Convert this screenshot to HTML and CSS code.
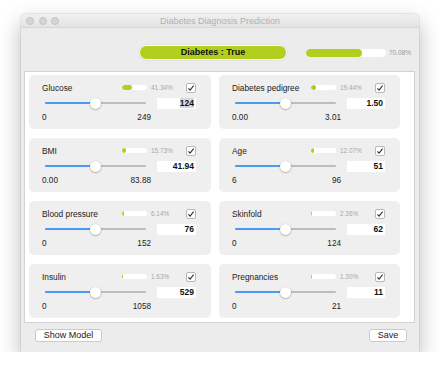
FILE: index.html
```html
<!DOCTYPE html>
<html lang="en">
<head>
    <meta charset="UTF-8">
    <title>Diabetes Diagnosis Prediction</title>
    <link rel="stylesheet" href="styles.css">
</head>
<body>
    <div class="window">
        <div class="titlebar">
            <div class="lights">
                <span></span><span></span><span></span>
            </div>
            <div class="title">Diabetes Diagnosis Prediction</div>
        </div>

        <div class="header">
            <div class="result">Diabetes : True</div>
            <div class="prob-bar"><div class="prob-fill" style="width: 70.08%"></div></div>
            <div class="prob-text">70.08%</div>
        </div>

        <div class="panel">
            <div class="card">
                <div class="card-top">
                    <span class="feat-name">Glucose</span>
                    <span class="weight-bar"><span class="weight-fill" style="width: 41.34%"></span></span>
                    <span class="weight-pct">41.34%</span>
                    <span class="check"><svg width="8" height="8" viewBox="0 0 8 8"><path d="M1.4 4.3 L3.1 6.1 L6.6 1.6" /></svg></span>
                </div>
                <div class="card-mid">
                    <div class="slider"><div class="slider-fill" style="width: 50%"></div><div class="slider-thumb" style="left: 50%"></div></div>
                    <div class="value"><span class="selected">124</span></div>
                </div>
                <div class="card-bottom"><span>0</span><span>249</span></div>
            </div>

            <div class="card">
                <div class="card-top">
                    <span class="feat-name">Diabetes pedigree</span>
                    <span class="weight-bar"><span class="weight-fill" style="width: 19.44%"></span></span>
                    <span class="weight-pct">19.44%</span>
                    <span class="check"><svg width="8" height="8" viewBox="0 0 8 8"><path d="M1.4 4.3 L3.1 6.1 L6.6 1.6" /></svg></span>
                </div>
                <div class="card-mid">
                    <div class="slider"><div class="slider-fill" style="width: 50%"></div><div class="slider-thumb" style="left: 50%"></div></div>
                    <div class="value">1.50</div>
                </div>
                <div class="card-bottom"><span>0.00</span><span>3.01</span></div>
            </div>

            <div class="card">
                <div class="card-top">
                    <span class="feat-name">BMI</span>
                    <span class="weight-bar"><span class="weight-fill" style="width: 15.73%"></span></span>
                    <span class="weight-pct">15.73%</span>
                    <span class="check"><svg width="8" height="8" viewBox="0 0 8 8"><path d="M1.4 4.3 L3.1 6.1 L6.6 1.6" /></svg></span>
                </div>
                <div class="card-mid">
                    <div class="slider"><div class="slider-fill" style="width: 50%"></div><div class="slider-thumb" style="left: 50%"></div></div>
                    <div class="value">41.94</div>
                </div>
                <div class="card-bottom"><span>0.00</span><span>83.88</span></div>
            </div>

            <div class="card">
                <div class="card-top">
                    <span class="feat-name">Age</span>
                    <span class="weight-bar"><span class="weight-fill" style="width: 12.07%"></span></span>
                    <span class="weight-pct">12.07%</span>
                    <span class="check"><svg width="8" height="8" viewBox="0 0 8 8"><path d="M1.4 4.3 L3.1 6.1 L6.6 1.6" /></svg></span>
                </div>
                <div class="card-mid">
                    <div class="slider"><div class="slider-fill" style="width: 50%"></div><div class="slider-thumb" style="left: 50%"></div></div>
                    <div class="value">51</div>
                </div>
                <div class="card-bottom"><span>6</span><span>96</span></div>
            </div>

            <div class="card">
                <div class="card-top">
                    <span class="feat-name">Blood pressure</span>
                    <span class="weight-bar"><span class="weight-fill" style="width: 6.14%"></span></span>
                    <span class="weight-pct">6.14%</span>
                    <span class="check"><svg width="8" height="8" viewBox="0 0 8 8"><path d="M1.4 4.3 L3.1 6.1 L6.6 1.6" /></svg></span>
                </div>
                <div class="card-mid">
                    <div class="slider"><div class="slider-fill" style="width: 50%"></div><div class="slider-thumb" style="left: 50%"></div></div>
                    <div class="value">76</div>
                </div>
                <div class="card-bottom"><span>0</span><span>152</span></div>
            </div>

            <div class="card">
                <div class="card-top">
                    <span class="feat-name">Skinfold</span>
                    <span class="weight-bar"><span class="weight-fill" style="width: 2.36%"></span></span>
                    <span class="weight-pct">2.36%</span>
                    <span class="check"><svg width="8" height="8" viewBox="0 0 8 8"><path d="M1.4 4.3 L3.1 6.1 L6.6 1.6" /></svg></span>
                </div>
                <div class="card-mid">
                    <div class="slider"><div class="slider-fill" style="width: 50%"></div><div class="slider-thumb" style="left: 50%"></div></div>
                    <div class="value">62</div>
                </div>
                <div class="card-bottom"><span>0</span><span>124</span></div>
            </div>

            <div class="card">
                <div class="card-top">
                    <span class="feat-name">Insulin</span>
                    <span class="weight-bar"><span class="weight-fill" style="width: 1.63%"></span></span>
                    <span class="weight-pct">1.63%</span>
                    <span class="check"><svg width="8" height="8" viewBox="0 0 8 8"><path d="M1.4 4.3 L3.1 6.1 L6.6 1.6" /></svg></span>
                </div>
                <div class="card-mid">
                    <div class="slider"><div class="slider-fill" style="width: 50%"></div><div class="slider-thumb" style="left: 50%"></div></div>
                    <div class="value">529</div>
                </div>
                <div class="card-bottom"><span>0</span><span>1058</span></div>
            </div>

            <div class="card">
                <div class="card-top">
                    <span class="feat-name">Pregnancies</span>
                    <span class="weight-bar"><span class="weight-fill" style="width: 1.30%"></span></span>
                    <span class="weight-pct">1.30%</span>
                    <span class="check"><svg width="8" height="8" viewBox="0 0 8 8"><path d="M1.4 4.3 L3.1 6.1 L6.6 1.6" /></svg></span>
                </div>
                <div class="card-mid">
                    <div class="slider"><div class="slider-fill" style="width: 50%"></div><div class="slider-thumb" style="left: 50%"></div></div>
                    <div class="value">11</div>
                </div>
                <div class="card-bottom"><span>0</span><span>21</span></div>
            </div>
        </div>

        <div class="footer">
            <button type="button">Show Model</button>
            <button type="button">Save</button>
        </div>
    </div>
</body>
</html>
```

FILE: styles.css
```css
* {
    box-sizing: border-box;
}
body {
    margin: 0;
    padding: 14px 0 0 21px;
    background-color: #ffffff;
    font-family: "Liberation Sans", Arial, sans-serif;
    color: #333;
}
.window {
    width: 398px;
    height: 338px;
    background-color: #ececec;
    border-radius: 4px 4px 0 0;
    box-shadow: 0 9px 22px rgba(0, 0, 0, 0.28), 0 0 0 1px rgba(0, 0, 0, 0.06);
    overflow: hidden;
}

/* Title bar */
.titlebar {
    height: 14px;
    background: linear-gradient(#f0f0f0, #e4e4e4);
    border-bottom: 1px solid #d6d6d6;
    position: relative;
    display: flex;
    align-items: center;
}
.lights {
    display: flex;
    gap: 4.5px;
    padding-left: 5px;
}
.lights span {
    width: 8px;
    height: 8px;
    border-radius: 50%;
    background-color: #d4d4d4;
    border: 1px solid #c4c4c4;
}
.title {
    position: absolute;
    left: 0;
    right: 0;
    text-align: center;
    font-size: 9px;
    color: #b0b0b0;
}

/* Result header */
.header {
    height: 43px;
    display: flex;
    align-items: flex-start;
    padding: 17px 0 0 118px;
}
.result {
    width: 148px;
    height: 15px;
    border-radius: 8px;
    background-color: #b2cf1f;
    border: 1.5px solid #fff;
    box-shadow: 0 0 0 0.5px #d8d8d8;
    font-size: 9px;
    font-weight: bold;
    color: #111;
    text-align: center;
    line-height: 12px;
}
.prob-bar {
    width: 80px;
    height: 8px;
    margin: 4px 0 0 19px;
    background-color: #fff;
    border-radius: 4px;
    overflow: hidden;
}
.prob-fill {
    height: 100%;
    background-color: #b2cf1f;
    border-radius: 4px;
}
.prob-text {
    margin: 4px 0 0 3px;
    font-size: 6.5px;
    color: #9a9a9a;
    line-height: 8px;
}

/* Feature panel */
.panel {
    margin: 0 4px 0 3px;
    height: 252px;
    background-color: #fff;
    border: 1px solid #d2d2d2;
    padding: 3px 14px 4px 4px;
    display: grid;
    grid-template-columns: 182px 181px;
    grid-template-rows: repeat(4, 54px);
    column-gap: 8px;
    row-gap: 9px;
}
.card {
    background-color: #efefef;
    border-radius: 5px;
    padding: 7px 15px 0 13px;
}
.card-top {
    height: 11px;
    display: flex;
    align-items: center;
}
.feat-name {
    flex: 1;
    font-size: 8.3px;
    color: #222;
}
.weight-bar {
    width: 25px;
    height: 5px;
    background-color: #fff;
    border-radius: 3px;
    overflow: hidden;
}
.weight-fill {
    display: block;
    height: 100%;
    background-color: #b2cf1f;
    border-radius: 3px;
}
.weight-pct {
    width: 39px;
    padding-left: 4px;
    font-size: 6.4px;
    color: #a8a8a8;
}
.check {
    width: 10px;
    height: 10px;
    background-color: #fff;
    border: 1px solid #b8b8b8;
    border-radius: 2px;
    display: flex;
    align-items: center;
    justify-content: center;
}
.check path {
    fill: none;
    stroke: #333;
    stroke-width: 1.1;
}

.card-mid {
    height: 11px;
    margin-top: 4.5px;
    display: flex;
    align-items: center;
}
.slider {
    position: relative;
    width: 102px;
    height: 2px;
    margin-left: 3px;
    background-color: #bdbdbd;
    border-radius: 1px;
}
.slider-fill {
    height: 100%;
    background-color: #4a9af4;
    border-radius: 1px;
}
.slider-thumb {
    position: absolute;
    top: -4.5px;
    width: 11px;
    height: 11px;
    margin-left: -5.5px;
    border-radius: 50%;
    background-color: #fff;
    box-shadow: 0 0.5px 1.5px rgba(0, 0, 0, 0.45);
}
.value {
    width: 39px;
    height: 11px;
    margin-left: 11px;
    background-color: #fff;
    font-size: 8.5px;
    font-weight: bold;
    color: #111;
    text-align: right;
    padding-right: 2px;
    line-height: 11px;
}
.selected {
    background-color: #d6d9de;
}

.card-bottom {
    width: 109px;
    margin-top: 4.5px;
    display: flex;
    justify-content: space-between;
    font-size: 8.2px;
    color: #222;
    line-height: 10px;
}

/* Footer */
.footer {
    display: flex;
    justify-content: space-between;
    padding: 6px 12px 0 14px;
}
button {
    height: 13px;
    padding: 0;
    font-family: "Liberation Sans", Arial, sans-serif;
    font-size: 9px;
    color: #222;
    background-color: #fff;
    border: 1px solid #cbcbcb;
    border-radius: 3px;
    line-height: 11px;
}
button:first-child {
    width: 67px;
}
button:last-child {
    width: 38px;
}
```
